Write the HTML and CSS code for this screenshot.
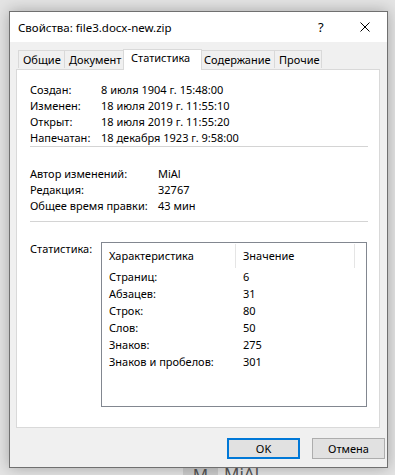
FILE: index.html
```html
<!DOCTYPE html>
<html>
<head>
    <title>Свойства: file3.docx-new.zip</title>
    <meta charset="UTF-8">
    <link rel="stylesheet" href="styles.css">
</head>
<body>
    <div class="window">
        <div class="titlebar">
            <span class="title">Свойства: file3.docx-new.zip</span>
            <span class="help">?</span>
            <span class="close">
                <svg width="10" height="10" viewBox="0 0 10 10"><path d="M0.5 0.5 L9.5 9.5 M9.5 0.5 L0.5 9.5" stroke="#000" stroke-width="1" fill="none"/></svg>
            </span>
        </div>

        <div class="body">
            <div class="tabs">
                <div class="tab tab-general">Общие</div>
                <div class="tab tab-doc">Документ</div>
                <div class="tab active">Статистика</div>
                <div class="tab tab-contents">Содержание</div>
                <div class="tab tab-other">Прочие</div>
            </div>

            <div class="panel">
                <div class="group dates">
                    <div class="row"><span class="label">Создан:</span><span>8 июля 1904 г. 15:48:00</span></div>
                    <div class="row"><span class="label">Изменен:</span><span>18 июля 2019 г. 11:55:10</span></div>
                    <div class="row"><span class="label">Открыт:</span><span>18 июля 2019 г. 11:55:20</span></div>
                    <div class="row"><span class="label">Напечатан:</span><span>18 декабря 1923 г. 9:58:00</span></div>
                </div>
                <div class="sep"></div>

                <div class="group info">
                    <div class="row"><span class="label">Автор изменений:</span><span>MiAl</span></div>
                    <div class="row"><span class="label">Редакция:</span><span>32767</span></div>
                    <div class="row"><span class="label">Общее время правки:</span><span>43 мин</span></div>
                </div>
                <div class="sep"></div>

                <div class="stats">
                    <div class="label">Статистика:</div>
                    <div class="listbox">
                        <div class="list-head">
                            <div class="col col-name">Характеристика</div>
                            <div class="col col-value">Значение</div>
                        </div>
                        <div class="list-row"><span class="col-name">Страниц:</span><span>6</span></div>
                        <div class="list-row"><span class="col-name">Абзацев:</span><span>31</span></div>
                        <div class="list-row"><span class="col-name">Строк:</span><span>80</span></div>
                        <div class="list-row"><span class="col-name">Слов:</span><span>50</span></div>
                        <div class="list-row"><span class="col-name">Знаков:</span><span>275</span></div>
                        <div class="list-row"><span class="col-name">Знаков и пробелов:</span><span>301</span></div>
                    </div>
                </div>
            </div>

            <div class="buttons">
                <button class="btn default">OK</button>
                <button class="btn">Отмена</button>
            </div>
        </div>
    </div>

    <div class="behind">
        <span class="behind-box">M</span>
        <span>MiAl</span>
    </div>
</body>
</html>
```

FILE: styles.css
```css
body {
    margin: 0;
    background: #e4e4e4;
    font-family: "Noto Sans", "Segoe UI", sans-serif;
    font-size: 11px;
    color: #000;
    overflow: hidden;
    height: 475px;
}
.window {
    position: relative;
    z-index: 1;
    margin: 11px 0 0 9px;
    width: 377px;
    height: 455px;
    border: 1px solid #707070;
    background: #f0f0f0;
    box-shadow: 0 0 14px rgba(0, 0, 0, 0.28);
}
.titlebar {
    height: 30px;
    background: #fff;
    display: flex;
    align-items: center;
    padding-left: 8px;
}
.title {
    flex: 1;
    font-size: 11.5px;
}
.help {
    width: 10px;
    font-size: 13px;
    margin-right: 32px;
}
.close {
    width: 10px;
    height: 10px;
    margin-right: 17px;
    display: flex;
}
.body {
    padding: 7px 0 0 6px;
}
.tabs {
    display: flex;
    align-items: flex-end;
    height: 20px;
    padding-left: 2px;
    position: relative;
    z-index: 1;
}
.tab {
    box-sizing: border-box;
    height: 18px;
    line-height: 17px;
    padding-left: 4px;
    border: 1px solid #d9d9d9;
    border-bottom: none;
    border-right: none;
    background: #f0f0f0;
    margin-bottom: 1px;
    white-space: nowrap;
}
.tab-general { width: 46px; }
.tab-doc { width: 61px; }
.tab-contents { width: 74px; }
.tab-other {
    width: 48px;
    border-right: 1px solid #d9d9d9;
}
.tab.active {
    width: 79px;
    height: 21px;
    line-height: 16px;
    margin: 0 -2px -1px;
    padding-left: 7px;
    background: #fff;
    border-right: 1px solid #d9d9d9;
    position: relative;
    z-index: 2;
}
.tab.active + .tab {
    border-left: none;
}
.panel {
    width: 362px;
    height: 357px;
    border: 1px solid #d9d9d9;
    background: #fff;
}
.group {
    padding-left: 13px;
}
.dates {
    padding-top: 12px;
}
.info {
    padding-top: 19px;
    padding-bottom: 7px;
}
.row {
    display: flex;
    height: 16px;
    line-height: 16px;
    white-space: nowrap;
}
.dates .label {
    width: 71px;
}
.info .label {
    width: 128px;
}
.sep {
    height: 1px;
    background: #d4d4d4;
    margin: 0 11px 0 13px;
}
.stats {
    display: flex;
    padding: 20px 0 0 13px;
}
.stats .label {
    width: 71px;
    line-height: 14px;
}
.listbox {
    width: 264px;
    height: 163px;
    border: 1px solid #828790;
}
.list-head {
    display: flex;
    height: 24px;
    padding-top: 1px;
}
.list-head .col {
    line-height: 23px;
    border-right: 1px solid #e5e5e5;
    padding-left: 7px;
}
.list-head .col-name {
    width: 126px;
}
.list-head .col-value {
    width: 111px;
}
.list-row {
    display: flex;
    height: 17px;
    line-height: 17px;
    padding-left: 7px;
}
.list-row .col-name {
    width: 134px;
}
.buttons {
    display: flex;
    justify-content: flex-end;
    gap: 12px;
    margin-top: 10px;
    padding-right: 2px;
}
.btn {
    width: 73px;
    height: 21px;
    padding: 0;
    font-family: inherit;
    font-size: 11px;
    color: #000;
    background: #e1e1e1;
    border: 1px solid #adadad;
}
.btn.default {
    border: 2px solid #0078d7;
}
.behind {
    display: flex;
    align-items: center;
    gap: 6px;
    margin: -6px 0 0 183px;
    font-size: 17px;
    color: #555;
}
.behind-box {
    background: #cccccc;
    width: 35px;
    height: 18px;
    text-align: center;
    line-height: 20px;
}
```
